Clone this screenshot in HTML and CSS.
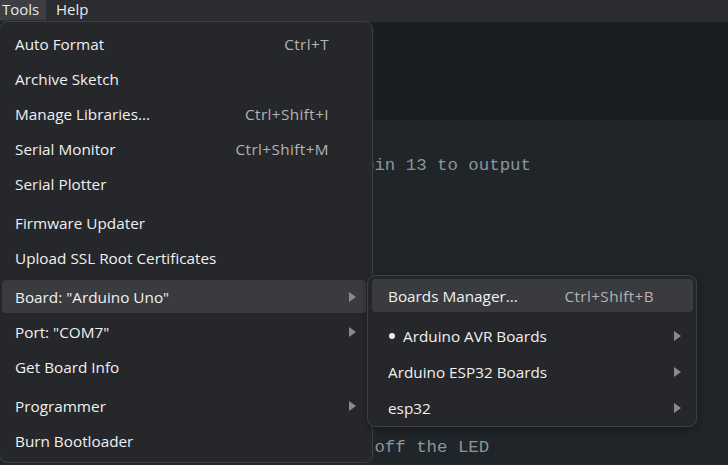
FILE: index.html
```html
<!DOCTYPE html>
<html>
<head>
<meta charset="utf-8">
<link rel="stylesheet" href="styles.css">
</head>
<body>
<div class="menubar">
  <span class="mb-item active">Tools</span>
  <span class="mb-item">Help</span>
</div>
<div class="workspace">
  <div class="toolbar"></div>
  <div class="editor">
<pre class="code"><span class="kw">void</span> setup() {
  pinMode(13, OUTPUT);   <span class="cm">// set pin 13 to output</span>
}

<span class="kw">void</span> loop() {
  digitalWrite(13, HIGH);
  delay(1000);

  digitalWrite(13, LOW);
  delay(1000);
}


  digitalWrite(13, LOW); <span class="cm">// turn off the LED</span></pre>
  </div>
</div>

<div class="menu main-menu">
  <div class="row"><span class="label">Auto Format</span><span class="key">Ctrl+T</span><span class="arrow"></span></div>
  <div class="row"><span class="label">Archive Sketch</span><span class="key"></span><span class="arrow"></span></div>
  <div class="row"><span class="label">Manage Libraries...</span><span class="key">Ctrl+Shift+I</span><span class="arrow"></span></div>
  <div class="row"><span class="label">Serial Monitor</span><span class="key">Ctrl+Shift+M</span><span class="arrow"></span></div>
  <div class="row"><span class="label">Serial Plotter</span><span class="key"></span><span class="arrow"></span></div>
  <div class="sep"></div>
  <div class="row"><span class="label">Firmware Updater</span><span class="key"></span><span class="arrow"></span></div>
  <div class="row"><span class="label">Upload SSL Root Certificates</span><span class="key"></span><span class="arrow"></span></div>
  <div class="sep"></div>
  <div class="row hover"><span class="label">Board: "Arduino Uno"</span><span class="key"></span><span class="arrow"><svg width="7" height="10" viewBox="0 0 7 10"><path d="M0 0 L7 5 L0 10 Z" fill="#8a8a8c"/></svg></span></div>
  <div class="row"><span class="label">Port: "COM7"</span><span class="key"></span><span class="arrow"><svg width="7" height="10" viewBox="0 0 7 10"><path d="M0 0 L7 5 L0 10 Z" fill="#8a8a8c"/></svg></span></div>
  <div class="row"><span class="label">Get Board Info</span><span class="key"></span><span class="arrow"></span></div>
  <div class="sep"></div>
  <div class="row"><span class="label">Programmer</span><span class="key"></span><span class="arrow"><svg width="7" height="10" viewBox="0 0 7 10"><path d="M0 0 L7 5 L0 10 Z" fill="#8a8a8c"/></svg></span></div>
  <div class="row"><span class="label">Burn Bootloader</span><span class="key"></span><span class="arrow"></span></div>
</div>

<div class="menu sub-menu">
  <div class="row hover"><span class="label">Boards Manager...</span><span class="key">Ctrl+Shift+B</span><span class="arrow"></span></div>
  <div class="sep sub-sep"></div>
  <div class="row"><span class="label"><span class="dot"></span>Arduino AVR Boards</span><span class="key"></span><span class="arrow"><svg width="7" height="10" viewBox="0 0 7 10"><path d="M0 0 L7 5 L0 10 Z" fill="#8a8a8c"/></svg></span></div>
  <div class="row"><span class="label">Arduino ESP32 Boards</span><span class="key"></span><span class="arrow"><svg width="7" height="10" viewBox="0 0 7 10"><path d="M0 0 L7 5 L0 10 Z" fill="#8a8a8c"/></svg></span></div>
  <div class="row"><span class="label">esp32</span><span class="key"></span><span class="arrow"><svg width="7" height="10" viewBox="0 0 7 10"><path d="M0 0 L7 5 L0 10 Z" fill="#8a8a8c"/></svg></span></div>
</div>
</body>
</html>
```
FILE: styles.css
```css
* { box-sizing: border-box; }
html, body {
  margin: 0;
  padding: 0;
  width: 728px;
  height: 465px;
  overflow: hidden;
  background: #202529;
  font-family: "Open Sans", "Noto Sans", sans-serif;
}
.menubar {
  height: 22px;
  background: #2b2c30;
  display: flex;
  align-items: flex-start;
  font-size: 15px;
  color: #e8e8e8;
}
.mb-item {
  height: 20px;
  line-height: 19px;
  padding: 0 6px 0 2px;
}
.mb-item.active {
  background: #3d3e42;
  width: 46px;
  margin-right: 8px;
}
.workspace {
  display: flex;
  flex-direction: column;
  height: 443px;
  overflow: hidden;
}
.toolbar {
  flex: 0 0 98px;
  background: #181e21;
}
.editor {
  flex: 1;
  min-height: 0;
  overflow: hidden;
  background: #202529;
  padding-top: 10px;
}
.code {
  margin: 0;
  padding-left: 30px;
  font-family: "Liberation Mono", "DejaVu Sans Mono", monospace;
  font-size: 17.4px;
  line-height: 23.5px;
  color: #c9cdcf;
}
.code .kw { color: #cf8a3b; }
.code .cm { color: #8b969a; }

.menu {
  position: absolute;
  background: #26272b;
  border: 1px solid #3e3f43;
  border-radius: 8px;
  display: flex;
  flex-direction: column;
  gap: 2px;
  font-size: 15.3px;
  color: #f0f0f0;
}
.main-menu {
  left: -1px;
  top: 21px;
  width: 374px;
  height: 442px;
  padding: 5px 0;
}
.row {
  height: 33px;
  flex: 0 0 33px;
  display: flex;
  align-items: center;
  border-radius: 4px;
  margin: 0 6px 0 2px;
  padding: 0 10px 0 13px;
  white-space: nowrap;
}
.row.hover { background: #3a3b3f; }
.label { flex: 1; display: flex; align-items: center; }
.key { color: #b3b3b5; letter-spacing: 0.4px; }
.arrow {
  width: 7px;
  height: 10px;
  margin-left: 20px;
  display: flex;
}
.sep { height: 2px; flex: 0 0 2px; }

.sub-menu {
  left: 367px;
  top: 275px;
  width: 330px;
  height: 152px;
  padding: 3px 0 2px;
  gap: 3px;
  box-shadow: 0 2px 8px rgba(0,0,0,0.3);
}
.sub-menu .row {
  margin: 0 3px 0 4px;
  padding: 0 12px 0 16px;
}
.sub-sep { height: 1px; flex: 0 0 1px; }
.dot {
  width: 6px;
  height: 6px;
  border-radius: 50%;
  background: #ececec;
  margin-right: 8px;
  margin-left: 1px;
}
```
